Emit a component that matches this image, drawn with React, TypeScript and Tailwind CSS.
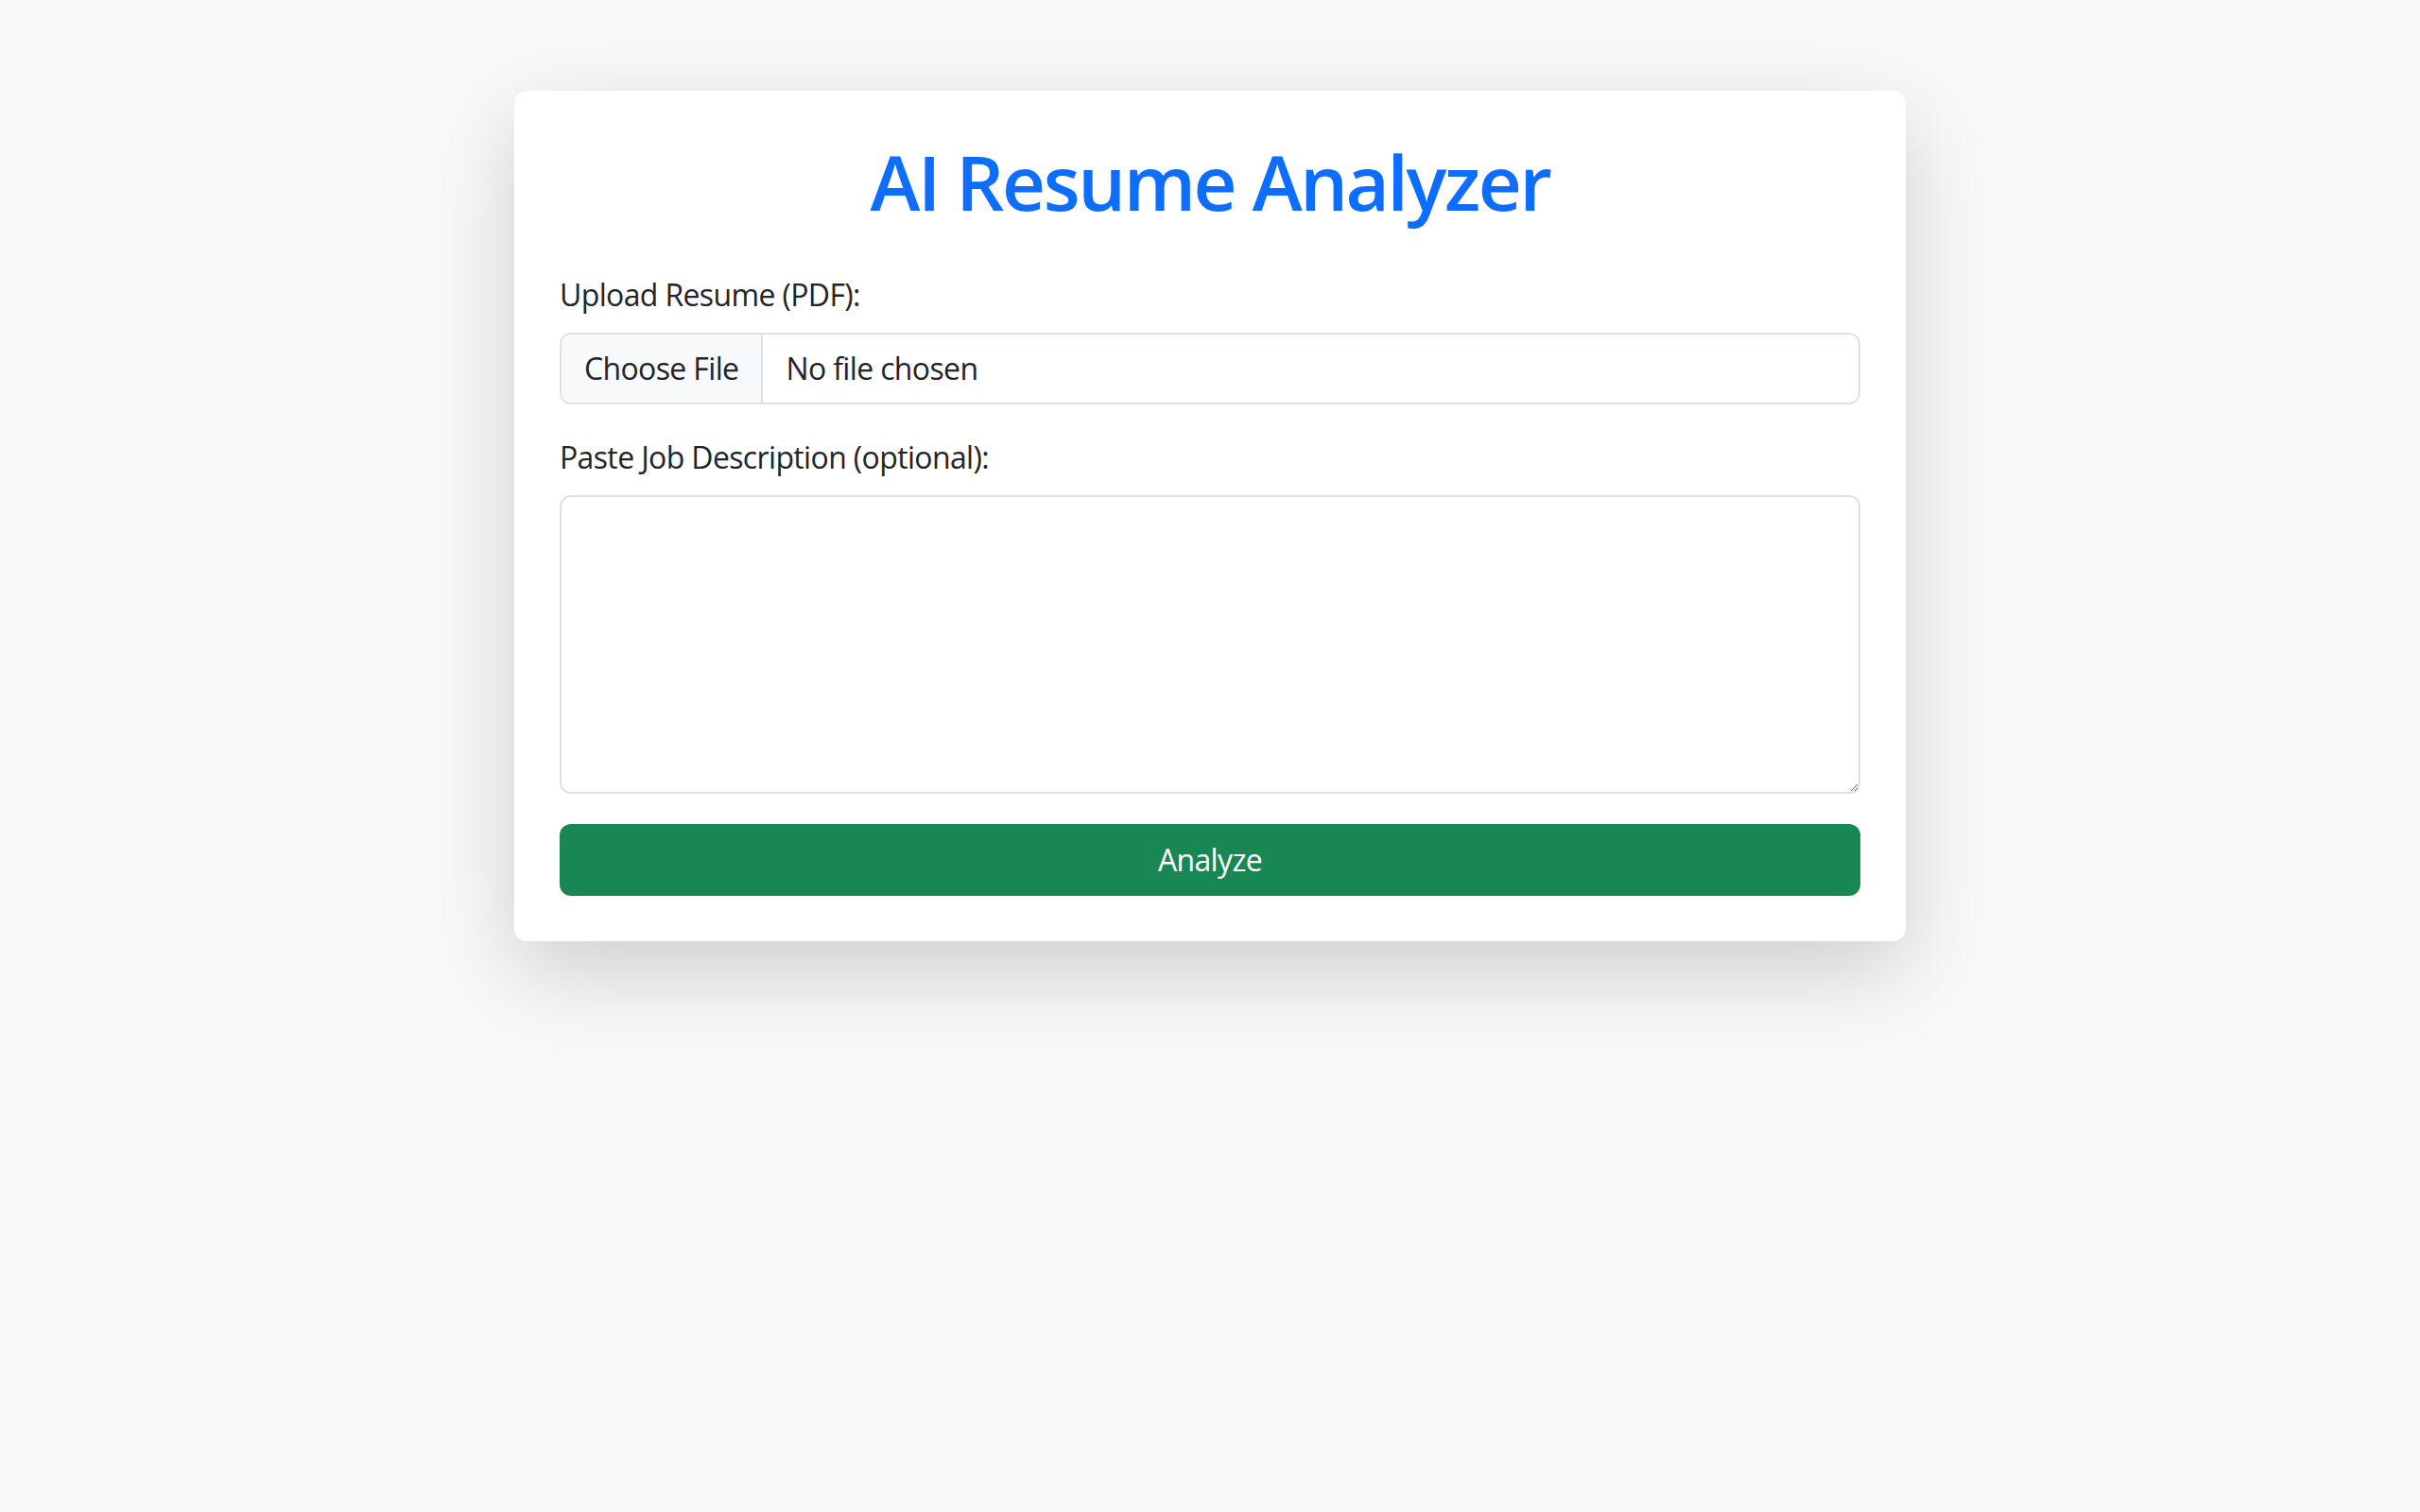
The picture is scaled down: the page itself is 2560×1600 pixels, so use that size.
import React from "react";

export default function App() {
  return (
    <div className="min-h-[1600px] w-full bg-[#f8f9fa] pt-[96px] font-['Open_Sans',sans-serif] text-[#212529]">
      <div className="mx-auto w-[1472px] rounded-[13px] bg-white p-[48px] shadow-[0_32px_96px_rgba(0,0,0,0.175)]">
        <h1 className="mb-[48px] text-center text-[80px] font-semibold leading-[96px] tracking-[-0.03em] text-[#0d6efd]">
          AI Resume Analyzer
        </h1>

        <div className="mb-[32px]">
          <div className="mb-[16px] text-[32px] leading-[48px] tracking-[-0.02em]">Upload Resume (PDF):</div>
          <div className="flex h-[76px] items-stretch overflow-hidden rounded-[12px] border-2 border-[#dee2e6] bg-white text-[32px] tracking-[-0.02em]">
            <div className="flex items-center border-r-2 border-[#dee2e6] bg-[#f8f9fa] px-[24px]">Choose File</div>
            <div className="flex items-center pl-[24px]">No file chosen</div>
          </div>
        </div>

        <div className="mb-[32px]">
          <div className="mb-[16px] text-[32px] leading-[48px] tracking-[-0.02em]">Paste Job Description (optional):</div>
          <textarea
            className="block h-[316px] w-full resize-y rounded-[12px] border-2 border-[#dee2e6] bg-white px-[24px] py-[12px] text-[32px] outline-none"
          />
        </div>

        <button className="flex h-[76px] w-full items-center justify-center rounded-[12px] bg-[#198754] text-[32px] tracking-[-0.02em] text-white">
          Analyze
        </button>
      </div>
    </div>
  );
}
